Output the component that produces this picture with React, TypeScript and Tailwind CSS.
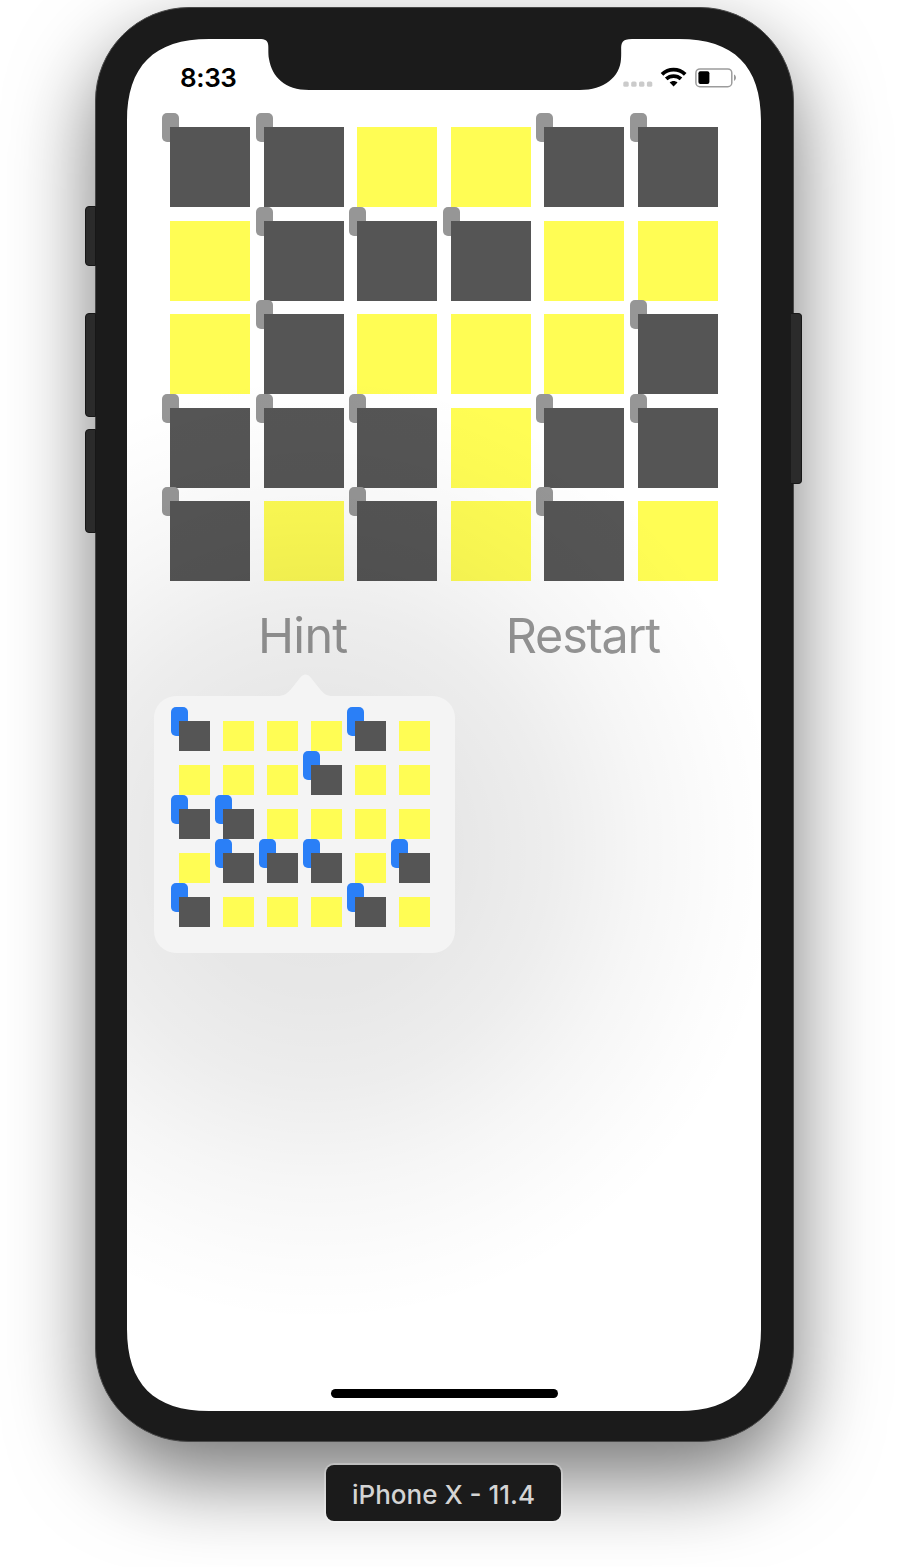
const board = ["110011", "011100", "010001", "111011", "101010"];
const hint = ["100010", "000100", "110000", "011101", "100010"];

function Cell({ dark, small }: { dark: boolean; small?: boolean }) {
  const size = small ? "h-[30.5px] w-[30.5px]" : "h-20 w-20";
  return (
    <div className={`relative ${size}`}>
      {dark && (
        <span
          className={`absolute -left-[8.1px] -top-[13.6px] h-[29px] w-[17px] rounded-[5px] ${
            small ? "bg-[#2a7ff7]" : "bg-[#969696]"
          }`}
        />
      )}
      <div className={`relative h-full w-full ${dark ? "bg-[#555555]" : "bg-[#fffd54]"}`} />
    </div>
  );
}

function Board({ rows, small }: { rows: string[]; small?: boolean }) {
  return (
    <div className="grid w-max grid-cols-[repeat(6,max-content)] gap-[13.5px]">
      {rows.flatMap((row, y) =>
        row.split("").map((c, x) => <Cell key={`${y}-${x}`} dark={c === "1"} small={small} />)
      )}
    </div>
  );
}

function SideButton({ className }: { className: string }) {
  return <span className={`block w-full border border-[#171717] bg-[#2b2b2b] ${className}`} />;
}

function StatusIcons() {
  return (
    <svg width="116" height="24" viewBox="0 0 116 24">
      <g fill="#cbcbcb">
        <rect x="1.3" y="15.4" width="5.4" height="5.4" rx="1.6" />
        <rect x="9.2" y="15.4" width="5.4" height="5.4" rx="1.6" />
        <rect x="17" y="15.4" width="5.4" height="5.4" rx="1.6" />
        <rect x="24.9" y="15.4" width="5.4" height="5.4" rx="1.6" />
      </g>
      <g fill="none" stroke="#000" strokeWidth="3.8">
        <path d="M40 8.4C46.600 2.1 56.600 2.1 63.2 8.4" />
        <path d="M44.2 12.9C48.4 9.1 54.8 9.1 59 12.9" />
      </g>
      <path d="M47.7 16.6C50 14.6 53.2 14.6 55.5 16.6L51.6 20.6Z" fill="#000" />
      <rect x="73.9" y="2.9" width="35.9" height="17.8" rx="4" fill="none" stroke="#9c9c9c" strokeWidth="1.5" />
      <rect x="76.400" y="5.3" width="11" height="12.6" rx="2" fill="#000" />
      <path d="M112 8.6C114.6 9.9 114.6 13.700 112 15Z" fill="#999" />
    </svg>
  );
}

export default function App() {
  return (
    <div className="flex h-[1567px] w-[910px] flex-col overflow-hidden bg-white pl-[85px] pt-[7px] font-['Inter',sans-serif]">
      <div className="flex h-[1435px] w-[717px] shrink-0">
        <div className="z-10 flex w-[11px] shrink-0 flex-col pt-[198.5px]">
          <SideButton className="h-[60px] rounded-l-[4px]" />
          <SideButton className="mt-[47px] h-[104px] rounded-l-[4px]" />
          <SideButton className="mt-[12px] h-[104px] rounded-l-[4px]" />
        </div>
        <div className="-ml-px flex h-full w-[699px] shrink-0 rounded-[94px] border border-[#484848] bg-[#1b1b1b] pl-[31px] pt-[31px] shadow-[0_36px_84px_rgba(0,0,0,0.54)]">
          <main className="relative flex h-[1372px] w-[634px] flex-col bg-white [clip-path:path('M0_82C0_27_27_0_82_0H132C145_0_140_7_142_20C145_38_158_51_182_51H453C477_51_493_38_494_20C495_7_491_0_505_0H552C607_0_634_27_634_82V1290C634_1345_607_1372_552_1372H82C27_1372_0_1345_0_1290Z')]">
            <header className="flex h-[88px] items-start justify-between pl-[53px] pr-[23px] pt-[23px]">
              <span className="text-[26px] font-semibold leading-8 tracking-[-0.4px] text-black">8:33</span>
              <div className="pt-1">
                <StatusIcons />
              </div>
            </header>
            <div className="flex justify-center">
              <Board rows={board} />
            </div>
            <nav className="flex justify-between px-[131px] pr-[101px] pt-[25px] text-[48.5px] leading-[60px] tracking-[-1.2px] text-[#979797]">
              <button className="tracking-[-0.7px]">Hint</button>
              <button>Restart</button>
            </nav>
            <div className="pointer-events-none absolute inset-0 bg-[radial-gradient(465px_475px_at_190px_810px,rgba(0,0,0,0.105)_0%,rgba(0,0,0,0.095)_30%,rgba(0,0,0,0.07)_50%,rgba(0,0,0,0.034)_70%,rgba(0,0,0,0.01)_88%,transparent_100%)]" />
            <section className="relative ml-[27px] mt-[29.5px] h-[257px] w-[301px] rounded-[22px] bg-[#f4f4f4] pl-[25px] pt-[25.4px]">
              <svg className="absolute bottom-full left-1/2 -mb-px -translate-x-1/2" width="56" height="24" viewBox="0 0 56 24">
                <path d="M0 23C7 23 10.5 20.5 14.5 15.5L23.5 4.2C26.5 .6 30.5 .6 33.5 4.2L42.5 15.5C46.5 20.5 49 23 56 23V24H0Z" fill="#f4f4f4" />
              </svg>
              <Board rows={hint} small />
            </section>
            <span className="mx-auto mb-[13px] mt-auto h-[9px] w-[227px] rounded-full bg-black" />
          </main>
        </div>
        <div className="z-10 -ml-[3px] w-[11px] shrink-0 pt-[305.5px]">
          <SideButton className="h-[171px] rounded-r-[4px] border-l-0" />
        </div>
      </div>
      <footer className="z-10 ml-[241px] mt-[23px] flex h-14 w-[235px] shrink-0 items-center justify-center rounded-[8px] bg-[#1b1b1b] pt-[3px] text-[26px] font-medium text-[#d4d4d4] shadow-[0_0_0_2px_rgba(255,255,255,0.25)]">
        <span className="whitespace-nowrap">iPhone X - 11.4</span>
      </footer>
    </div>
  );
}
